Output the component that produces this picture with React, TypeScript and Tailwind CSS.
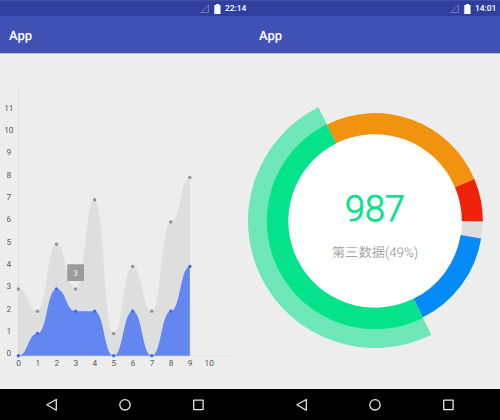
import React from 'react';

const X0 = 18.4;
const Y0 = 355.8;
const STEP_X = 19.05;
const STEP_Y = 22.3;
const GREY = [3, 2, 5, 3, 7, 1, 4, 2, 6, 8];
const BLUE = [0, 1, 3, 2, 2, 0, 2, 0, 2, 4];

const px = (i: number) => X0 + i * STEP_X;
const py = (v: number) => Y0 - v * STEP_Y;

function areaPath(values: number[]) {
  let d = `M${px(0)} ${Y0}L${px(0)} ${py(values[0])}`;
  for (let i = 1; i < values.length; i++) {
    const mid = (px(i - 1) + px(i)) / 2;
    d += `C${mid} ${py(values[i - 1])} ${mid} ${py(values[i])} ${px(i)} ${py(values[i])}`;
  }
  return `${d}L${px(values.length - 1)} ${Y0}Z`;
}

const CX = 375;
const CY = 221;

function ring(from: number, to: number, inner: number, outer: number) {
  const at = (deg: number, r: number) => {
    const a = (deg * Math.PI) / 180;
    return `${CX + r * Math.cos(a)} ${CY + r * Math.sin(a)}`;
  };
  const large = to - from > 180 ? 1 : 0;
  return `M${at(from, outer)}A${outer} ${outer} 0 ${large} 1 ${at(to, outer)}L${at(to, inner)}A${inner} ${inner} 0 ${large} 0 ${at(from, inner)}Z`;
}

function Header({ time, title, status }: { time: string; title: string; status: string }) {
  return (
    <header className="h-[53px] bg-[#3f51b5] text-white">
      <div className={`flex h-4 items-center justify-end border-t border-[#3f4da6] bg-[#303f9f] ${status}`}>
        <svg className="mr-[5px] h-[9px] w-[9px]" viewBox="0 0 9 9" fill="none">
          <path d="M8.5 .8V8.5H.8Z" stroke="#7079b8" strokeWidth="1" />
        </svg>
        <svg className="mr-[4px] h-[10px] w-[7px]" viewBox="0 0 7 10" fill="#fff">
          <path d="M2 0H5V1H6.5V10H.3V1H2Z" />
        </svg>
        <span className="w-[21px] whitespace-nowrap pt-[2px] text-[8.4px] font-medium leading-none">{time}</span>
      </div>
      <div className={`flex h-[38px] items-center pt-[2px] text-[13px] font-medium leading-none ${title}`}>App</div>
    </header>
  );
}

function NavBar({ pad }: { pad: string }) {
  return (
    <nav className={`flex h-[31px] items-center bg-black ${pad}`}>
      <svg className="h-[14px] w-[160px]" viewBox="0 0 160 14" fill="none" stroke="#e6e6e6" strokeWidth="1.3">
        <path d="M10.3 1.5V12.2L.9 6.8Z" strokeLinejoin="round" />
        <circle cx="79" cy="6.8" r="5.2" />
        <rect x="147.7" y="2.2" width="9.4" height="9.4" rx=".4" />
      </svg>
    </nav>
  );
}

function LineChart() {
  return (
    <svg className="block h-[336px] w-[248px]" viewBox="0 53 248 336">
      <path d={`M${X0} 85.5V${Y0 + 0.3}H232`} fill="none" stroke="#dedede" strokeWidth="1" />
      <path d={areaPath(GREY)} fill="#dedede" />
      <path d={areaPath(BLUE)} fill="#6486f0" />
      {GREY.map((v, i) => (
        <circle key={i} cx={px(i)} cy={py(v)} r="1.75" fill="#949494" />
      ))}
      {BLUE.map((v, i) => (
        <circle key={i} cx={px(i)} cy={py(v)} r="1.75" fill="#416bf0" />
      ))}
      <rect x="67.2" y="264.2" width="16.8" height="16.8" rx="1" fill="#9b9b9b" />
      <text x="75.6" y="276" textAnchor="middle" fontSize="8.3" fill="#f2f2f2">3</text>
      <g fontSize="8.3" fill="#5c5c5c" textAnchor="middle">
        {Array.from({ length: 12 }, (_, i) => (
          <text key={`y${i}`} x="8.8" y={356.4 - i * 22.35}>{i}</text>
        ))}
        {Array.from({ length: 11 }, (_, i) => (
          <text key={`x${i}`} x={px(i) + 0.3} y="366.4">{i}</text>
        ))}
      </g>
    </svg>
  );
}

function DonutChart() {
  return (
    <svg className="block h-[336px] w-[252px]" viewBox="248 53 252 336">
      <circle cx={CX} cy={CY} r="108.4" fill="#f5f5f5" />
      <circle cx={CX} cy={CY} r="87.5" fill="#fff" />
      <path d={ring(0.7, 9.3, 87, 107.8)} fill="#dedede" />
      <path d={ring(9.3, 63.7, 86.8, 107.6)} fill="#058bf7" />
      <path d={ring(63.7, 243.5, 86.8, 127)} fill="#6de7b7" />
      <path d={ring(63.7, 243.5, 86.8, 108.2)} fill="#04e28a" />
      <path d={ring(243.5, 337.1, 86.8, 107.9)} fill="#f1930e" />
      <path d={ring(337.1, 360.2, 86.8, 107.9)} fill="#f1220c" />
      <text className="font-light" x="375" y="221.4" textAnchor="middle" fontSize="36" fill="#04e28a" stroke="#04e28a" strokeWidth=".8">987</text>
      <text className="font-light" x="375" y="257.2" textAnchor="middle" fontSize="13.3" fill="#999" stroke="#999" strokeWidth=".1">第三数据(49%)</text>
    </svg>
  );
}

export default function App() {
  return (
    <div className="flex h-[420px] w-[500px] overflow-hidden bg-[#ededed] font-[Roboto,'Noto_Sans_CJK_SC',sans-serif] [text-rendering:geometricPrecision]">
      <section className="w-[248px] shrink-0">
        <Header time="22:14" title="pl-[9px]" status="pr-[2px]" />
        <main className="h-[336px] shadow-[inset_0_1px_0_#bdbdbd]">
          <LineChart />
        </main>
        <NavBar pad="pl-[46px]" />
      </section>
      <section className="w-[252px] shrink-0">
        <Header time="14:01" title="pl-[11px]" status="pr-[4px]" />
        <main className="h-[336px] shadow-[inset_0_1px_0_#bdbdbd]">
          <DonutChart />
        </main>
        <NavBar pad="pl-[48px]" />
      </section>
    </div>
  );
}
